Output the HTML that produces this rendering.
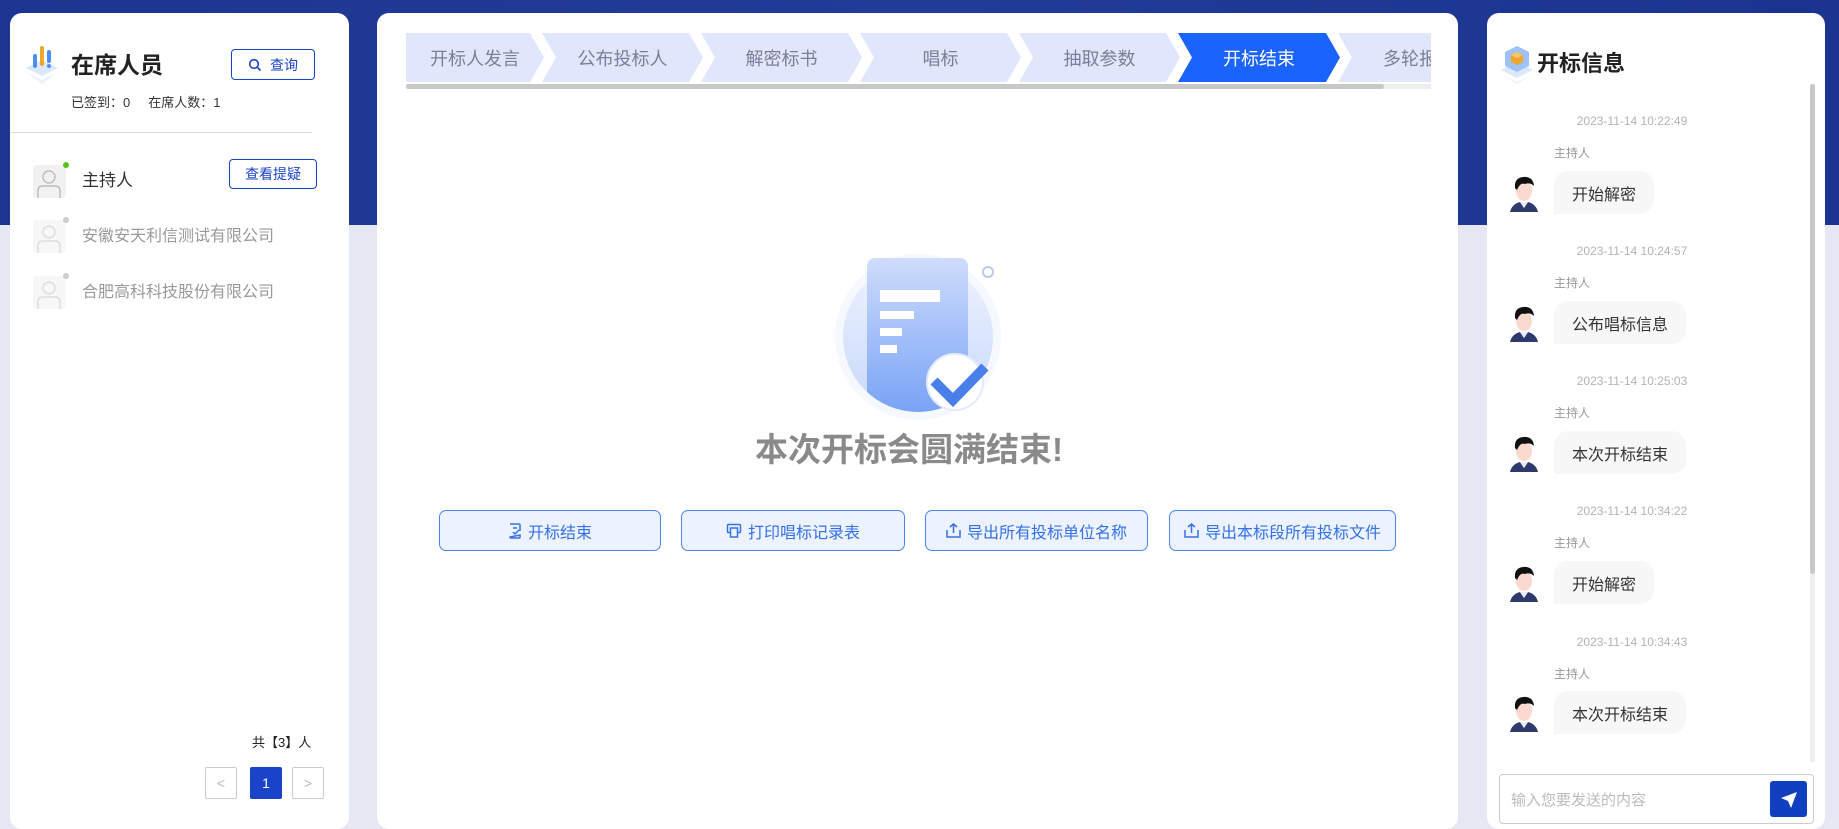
<!DOCTYPE html>
<html><head><meta charset="utf-8"><style>
*{box-sizing:border-box;margin:0;padding:0}
body{width:1839px;height:829px;overflow:hidden;position:relative;background:#e5e7f3;font-family:"Liberation Sans","Noto Sans CJK SC",sans-serif;color:#333}
.hdr{position:absolute;left:0;top:0;width:1839px;height:225px;background:linear-gradient(90deg,#1c3590,#213c98 50%,#1a3490)}
.panel{position:absolute;background:#fff;border-radius:12px}
.abs{position:absolute}
.btn{position:absolute;border:1px solid #1a44c8;border-radius:4px;color:#1a44c8;font-size:14px;display:flex;align-items:center;justify-content:center;background:#fff}
.step{position:absolute;top:33px;height:49px;background:#e0e6fb;color:#7a7f99;font-size:18px;display:flex;align-items:center;justify-content:center;clip-path:polygon(0 0,calc(100% - 14px) 0,100% 50%,calc(100% - 14px) 100%,0 100%,14px 50%)}
.abtn{position:absolute;top:510px;height:41px;border:1px solid #4a86f0;border-radius:7px;background:#ecf2fe;color:#3470e8;font-size:16px;display:flex;align-items:center;justify-content:center;gap:6px}
.ts{position:absolute;left:1499px;width:266px;text-align:center;font-size:12px;color:#b3b3b3}
.who{position:absolute;left:1554px;font-size:12px;color:#999}
.bub{position:absolute;left:1554px;height:43px;background:#f7f7f7;border-radius:14px 14px 14px 0;font-size:16px;color:#333;display:flex;align-items:center;padding:0 18px}
.av{position:absolute;left:1508px;width:32px;height:38px}
.user{position:absolute;left:33px;width:33px;height:33px;border-radius:4px;background:#f1f1f1}
</style></head><body>
<div class="hdr"></div>

<!-- LEFT -->
<div class="panel" style="left:10px;top:13px;width:339px;height:816px">
</div>
<svg class="abs" style="left:24px;top:44px" width="36" height="42" viewBox="0 0 36 42">
<path d="M2 24 L18 16 L34 24 L18 32Z" fill="#dbe8fb"/><path d="M2 28 L18 36 L34 28 L18 40Z" fill="#eaf1fc"/>
<rect x="9" y="10" width="4" height="14" rx="2" fill="#4d8ef5"/><rect x="16" y="2" width="4" height="20" rx="2" fill="#f0a531"/><rect x="23" y="6" width="4" height="13" rx="2" fill="#4d8ef5"/><circle cx="25" cy="22" r="2" fill="#4d8ef5"/></svg>
<div class="abs" style="left:71px;top:46px;font-size:23px;font-weight:bold;color:#222">在席人员</div>
<div class="btn" style="left:231px;top:49px;width:84px;height:31px">
<svg width="14" height="14" viewBox="0 0 14 14" style="margin-right:8px"><circle cx="6" cy="6" r="4.3" fill="none" stroke="#1a44c8" stroke-width="1.6"/><path d="M9.2 9.2 L12.5 12.5" stroke="#1a44c8" stroke-width="1.6"/></svg>查询</div>
<div class="abs" style="left:71px;top:92px;font-size:13px;color:#333">已签到：0&nbsp;&nbsp;&nbsp;&nbsp;&nbsp;在席人数：1</div>
<div class="abs" style="left:10px;top:132px;width:302px;height:1px;background:#ddd"></div>

<div class="user" style="top:165px"><svg width="33" height="33" viewBox="0 0 33 33"><circle cx="16" cy="12" r="6" fill="none" stroke="#bbb" stroke-width="1.4"/><path d="M5 33 V26 Q5 21 10 21 H22 Q27 21 27 26 V33" fill="none" stroke="#bbb" stroke-width="1.4"/></svg></div>
<div class="abs" style="left:63px;top:162px;width:6px;height:6px;border-radius:50%;background:#52c41a"></div>
<div class="abs" style="left:82px;top:166px;font-size:17px;color:#333">主持人</div>
<div class="btn" style="left:229px;top:159px;width:88px;height:30px">查看提疑</div>

<div class="user" style="top:220px;background:#f7f7f7"><svg width="33" height="33" viewBox="0 0 33 33"><circle cx="16" cy="12" r="6" fill="none" stroke="#ddd" stroke-width="1.4"/><path d="M5 33 V26 Q5 21 10 21 H22 Q27 21 27 26 V33" fill="none" stroke="#ddd" stroke-width="1.4"/></svg></div>
<div class="abs" style="left:63px;top:217px;width:6px;height:6px;border-radius:50%;background:#ccc"></div>
<div class="abs" style="left:82px;top:222px;font-size:16px;color:#999">安徽安天利信测试有限公司</div>

<div class="user" style="top:276px;background:#f7f7f7"><svg width="33" height="33" viewBox="0 0 33 33"><circle cx="16" cy="12" r="6" fill="none" stroke="#ddd" stroke-width="1.4"/><path d="M5 33 V26 Q5 21 10 21 H22 Q27 21 27 26 V33" fill="none" stroke="#ddd" stroke-width="1.4"/></svg></div>
<div class="abs" style="left:63px;top:273px;width:6px;height:6px;border-radius:50%;background:#ccc"></div>
<div class="abs" style="left:82px;top:278px;font-size:16px;color:#999">合肥高科科技股份有限公司</div>

<div class="abs" style="left:252px;top:732px;font-size:13px;color:#222">共【3】人</div>
<div class="abs" style="left:205px;top:767px;width:32px;height:32px;border:1px solid #ccc;border-radius:2px;color:#bbb;text-align:center;line-height:30px;font-size:14px">&lt;</div>
<div class="abs" style="left:250px;top:767px;width:32px;height:32px;background:#1a44c8;border-radius:2px;color:#fff;text-align:center;line-height:32px;font-size:14px">1</div>
<div class="abs" style="left:292px;top:767px;width:32px;height:32px;border:1px solid #ccc;border-radius:2px;color:#bbb;text-align:center;line-height:30px;font-size:14px">&gt;</div>

<!-- MIDDLE -->
<div class="panel" style="left:377px;top:13px;width:1081px;height:816px"></div>
<div class="abs" style="left:406px;top:33px;width:1025px;height:50px;overflow:hidden">
<div class="step" style="left:0;width:138px;top:0;clip-path:polygon(0 0,calc(100% - 14px) 0,100% 50%,calc(100% - 14px) 100%,0 100%)">开标人发言</div>
<div class="step" style="left:136px;width:161px;top:0">公布投标人</div>
<div class="step" style="left:295px;width:161px;top:0">解密标书</div>
<div class="step" style="left:454px;width:161px;top:0">唱标</div>
<div class="step" style="left:613px;width:161px;top:0">抽取参数</div>
<div class="step" style="left:772px;width:162px;top:0;background:#1b63fd;color:#fff">开标结束</div>
<div class="step" style="left:932px;width:162px;top:0">多轮报价</div>
</div>
<div class="abs" style="left:406px;top:84px;width:1025px;height:5px;background:#eee"></div>
<div class="abs" style="left:406px;top:84px;width:978px;height:5px;background:#c8c8c8;border-radius:3px"></div>

<svg class="abs" style="left:830px;top:250px" width="180" height="170" viewBox="830 250 180 170">
<defs><linearGradient id="g1" x1="0" y1="0" x2="0" y2="1"><stop offset="0" stop-color="#eef3fe"/><stop offset="1" stop-color="#c7d8fb"/></linearGradient>
<linearGradient id="g2" x1="0" y1="0" x2="0" y2="1"><stop offset="0" stop-color="#cfdcfb"/><stop offset="1" stop-color="#6f9df5"/></linearGradient>
<clipPath id="cc"><circle cx="918" cy="337" r="75"/><rect x="867" y="258" width="101" height="80"/></clipPath></defs>
<circle cx="918" cy="337" r="83" fill="#f5f8ff"/>
<circle cx="918" cy="337" r="75" fill="url(#g1)"/>
<g clip-path="url(#cc)"><rect x="867" y="258" width="101" height="170" rx="8" fill="url(#g2)"/></g>
<rect x="880" y="290" width="60" height="12" fill="#fff"/><rect x="880" y="311" width="34" height="8" fill="#fff"/><rect x="880" y="328" width="22" height="8" fill="#fff"/><rect x="880" y="345" width="17" height="8" fill="#fff"/>
<circle cx="955" cy="382" r="28" fill="#fff" stroke="#e3ebfc" stroke-width="2"/>
<path d="M934 381 L953 400 L985 367" fill="none" stroke="#4a7fe9" stroke-width="10"/>
<circle cx="988" cy="272" r="5" fill="none" stroke="#b9c9ef" stroke-width="2"/>
</svg>
<div class="abs" style="left:591px;top:423px;width:636px;text-align:center;font-size:33px;font-weight:bold;color:#8a8a8a">本次开标会圆满结束!</div>

<div class="abtn" style="left:439px;width:222px"><svg width="14" height="16" viewBox="0 0 14 16"><path d="M2 1 H11 Q12 1 12 2 V8 M12 12 V14 Q12 15 11 15 H3 Q2 15 2 14 Z M5 5 H9 M5 9 L7 11 L11 7" fill="none" stroke="#3470e8" stroke-width="1.5"/></svg>开标结束</div>
<div class="abtn" style="left:681px;width:224px"><svg width="16" height="15" viewBox="0 0 16 15"><rect x="1.5" y="1.5" width="13" height="8" rx="1" fill="none" stroke="#3470e8" stroke-width="1.5"/><rect x="4.5" y="5" width="7" height="9" fill="#ecf2fe" stroke="#3470e8" stroke-width="1.5"/></svg>打印唱标记录表</div>
<div class="abtn" style="left:925px;width:223px"><svg width="15" height="15" viewBox="0 0 15 15"><path d="M1 7 V14 H14 V7 M7.5 10 V1 M4 4 L7.5 1 L11 4" fill="none" stroke="#3470e8" stroke-width="1.5"/></svg>导出所有投标单位名称</div>
<div class="abtn" style="left:1169px;width:227px"><svg width="15" height="15" viewBox="0 0 15 15"><path d="M1 7 V14 H14 V7 M7.5 10 V1 M4 4 L7.5 1 L11 4" fill="none" stroke="#3470e8" stroke-width="1.5"/></svg>导出本标段所有投标文件</div>

<!-- RIGHT -->
<div class="panel" style="left:1487px;top:13px;width:338px;height:816px"></div>
<svg class="abs" style="left:1499px;top:44px" width="36" height="40" viewBox="0 0 36 40">
<path d="M2 26 L18 18 L34 26 L18 34Z" fill="#dbe8fb"/><path d="M2 30 L18 38 L34 30 L18 40Z" fill="#eaf1fc"/>
<path d="M6 8 L18 2 L30 8 V22 L18 28 L6 22Z" fill="#9ec1f7"/><path d="M12 11 L18 8 L24 11 V18 L18 21 L12 18Z" fill="#f0a531"/><path d="M12 11 L18 14 L24 11 L18 8Z" fill="#f8c565"/></svg>
<div class="abs" style="left:1537px;top:46px;font-size:22px;font-weight:bold;color:#222">开标信息</div>
<div class="abs" style="left:1810px;top:84px;width:5px;height:678px;background:#eee"></div>
<div class="abs" style="left:1810px;top:84px;width:5px;height:490px;background:#c8c8c8;border-radius:3px"></div>

<div class="ts" style="top:114px">2023-11-14 10:22:49</div>
<div class="who" style="top:144px">主持人</div>
<div class="bub" style="top:171px">开始解密</div>
<svg class="av" style="top:174px" viewBox="0 0 32 38"><path d="M2 38 Q4 30 12 28 L16 34 L20 28 Q28 30 30 38Z" fill="#2e3a6e"/><path d="M12 28 L16 34 L20 28Z" fill="#e9ecf7"/><ellipse cx="16" cy="17" rx="8" ry="10" fill="#fcd9cf"/><path d="M7 14 Q6 4 15 3 Q25 2 26 12 Q22 8 17 10 Q12 8 9 16Z" fill="#111"/></svg>

<div class="ts" style="top:244px">2023-11-14 10:24:57</div>
<div class="who" style="top:274px">主持人</div>
<div class="bub" style="top:301px">公布唱标信息</div>
<svg class="av" style="top:304px" viewBox="0 0 32 38"><path d="M2 38 Q4 30 12 28 L16 34 L20 28 Q28 30 30 38Z" fill="#2e3a6e"/><path d="M12 28 L16 34 L20 28Z" fill="#e9ecf7"/><ellipse cx="16" cy="17" rx="8" ry="10" fill="#fcd9cf"/><path d="M7 14 Q6 4 15 3 Q25 2 26 12 Q22 8 17 10 Q12 8 9 16Z" fill="#111"/></svg>

<div class="ts" style="top:374px">2023-11-14 10:25:03</div>
<div class="who" style="top:404px">主持人</div>
<div class="bub" style="top:431px">本次开标结束</div>
<svg class="av" style="top:434px" viewBox="0 0 32 38"><path d="M2 38 Q4 30 12 28 L16 34 L20 28 Q28 30 30 38Z" fill="#2e3a6e"/><path d="M12 28 L16 34 L20 28Z" fill="#e9ecf7"/><ellipse cx="16" cy="17" rx="8" ry="10" fill="#fcd9cf"/><path d="M7 14 Q6 4 15 3 Q25 2 26 12 Q22 8 17 10 Q12 8 9 16Z" fill="#111"/></svg>

<div class="ts" style="top:504px">2023-11-14 10:34:22</div>
<div class="who" style="top:534px">主持人</div>
<div class="bub" style="top:561px">开始解密</div>
<svg class="av" style="top:564px" viewBox="0 0 32 38"><path d="M2 38 Q4 30 12 28 L16 34 L20 28 Q28 30 30 38Z" fill="#2e3a6e"/><path d="M12 28 L16 34 L20 28Z" fill="#e9ecf7"/><ellipse cx="16" cy="17" rx="8" ry="10" fill="#fcd9cf"/><path d="M7 14 Q6 4 15 3 Q25 2 26 12 Q22 8 17 10 Q12 8 9 16Z" fill="#111"/></svg>

<div class="ts" style="top:635px">2023-11-14 10:34:43</div>
<div class="who" style="top:665px">主持人</div>
<div class="bub" style="top:691px">本次开标结束</div>
<svg class="av" style="top:694px" viewBox="0 0 32 38"><path d="M2 38 Q4 30 12 28 L16 34 L20 28 Q28 30 30 38Z" fill="#2e3a6e"/><path d="M12 28 L16 34 L20 28Z" fill="#e9ecf7"/><ellipse cx="16" cy="17" rx="8" ry="10" fill="#fcd9cf"/><path d="M7 14 Q6 4 15 3 Q25 2 26 12 Q22 8 17 10 Q12 8 9 16Z" fill="#111"/></svg>
<div class="abs" style="left:1487px;top:734px;width:320px;height:28px;background:#fff"></div>

<div class="abs" style="left:1499px;top:774px;width:315px;height:50px;border:1px solid #ccc;border-radius:4px;background:#fff"></div>
<div class="abs" style="left:1511px;top:789px;font-size:15px;color:#bbb">输入您要发送的内容</div>
<div class="abs" style="left:1770px;top:781px;width:37px;height:36px;background:#1040c0;border-radius:3px"><svg width="37" height="36" viewBox="0 0 37 36"><path d="M11 17 L27 11 L21 27 L18 20Z" fill="#fff"/></svg></div>
</body></html>
